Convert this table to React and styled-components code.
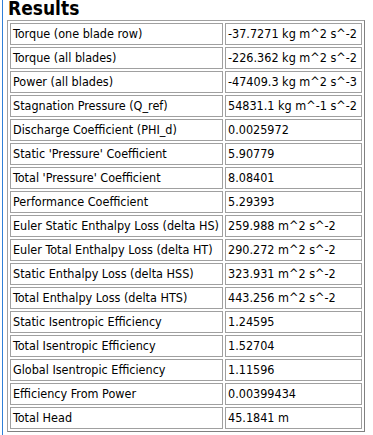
import React from "react";
import styled, { createGlobalStyle } from "styled-components";

const GlobalStyle = createGlobalStyle`
  html, body {
    margin: 0;
    padding: 0;
    background: #ffffff;
  }
`;

const Page = styled.div`
  min-height: 100vh;
  box-sizing: border-box;
  margin-left: 2px;
  padding-left: 4px;
  border-left: 1px solid #2f7fd8;
  font-family: "DejaVu Sans Condensed", "Liberation Sans", sans-serif;
  color: #000000;
`;

const Title = styled.h1`
  margin: 0 0 4px 1px;
  font-size: 19px;
  line-height: 17px;
  height: 16px;
  font-weight: bold;
`;

const ResultsTable = styled.div`
  display: grid;
  grid-template-columns: 213px 137px;
  grid-auto-rows: 22px;
  gap: 2px;
  padding: 2px;
  width: max-content;
  border: 1px solid;
  border-color: #a0a0a0 #808080 #808080 #a0a0a0;
`;

const Cell = styled.div`
  box-sizing: border-box;
  display: flex;
  align-items: center;
  padding: 0 2px;
  border: 1px solid #a0a0a0;
  font-size: 12.5px;
  line-height: 16px;
  white-space: nowrap;
  overflow: hidden;
`;

const results = [
  ["Torque (one blade row)", "-37.7271 kg m^2 s^-2"],
  ["Torque (all blades)", "-226.362 kg m^2 s^-2"],
  ["Power (all blades)", "-47409.3 kg m^2 s^-3"],
  ["Stagnation Pressure (Q_ref)", "54831.1 kg m^-1 s^-2"],
  ["Discharge Coefficient (PHI_d)", "0.0025972"],
  ["Static 'Pressure' Coefficient", "5.90779"],
  ["Total 'Pressure' Coefficient", "8.08401"],
  ["Performance Coefficient", "5.29393"],
  ["Euler Static Enthalpy Loss (delta HS)", "259.988 m^2 s^-2"],
  ["Euler Total Enthalpy Loss (delta HT)", "290.272 m^2 s^-2"],
  ["Static Enthalpy Loss (delta HSS)", "323.931 m^2 s^-2"],
  ["Total Enthalpy Loss (delta HTS)", "443.256 m^2 s^-2"],
  ["Static Isentropic Efficiency", "1.24595"],
  ["Total Isentropic Efficiency", "1.52704"],
  ["Global Isentropic Efficiency", "1.11596"],
  ["Efficiency From Power", "0.00399434"],
  ["Total Head", "45.1841 m"],
];

function App() {
  return (
    <>
      <GlobalStyle />
      <Page>
        <Title>Results</Title>
        <ResultsTable>
          {results.map(([label, value]) => (
            <React.Fragment key={label}>
              <Cell>{label}</Cell>
              <Cell>{value}</Cell>
            </React.Fragment>
          ))}
        </ResultsTable>
      </Page>
    </>
  );
}

export default App;
